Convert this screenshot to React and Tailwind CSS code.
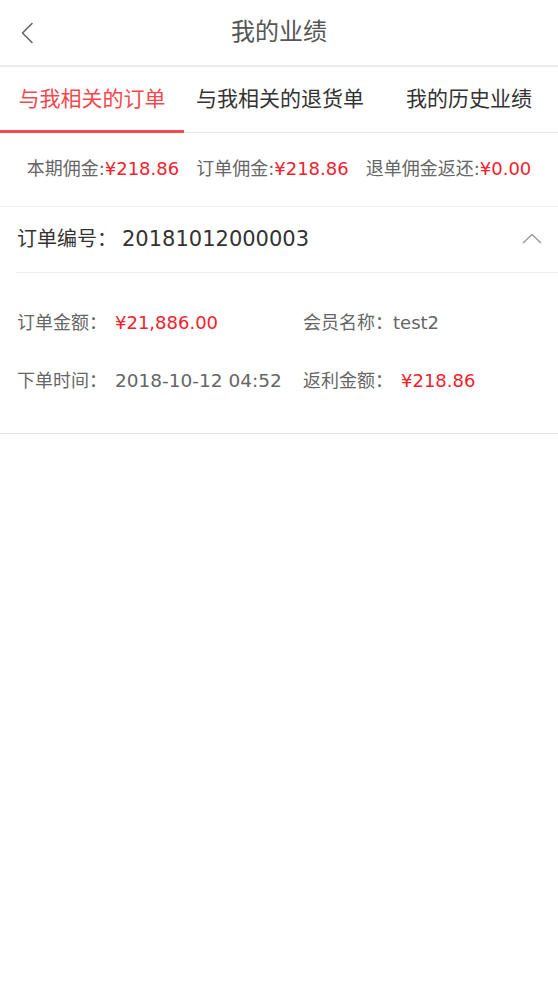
import { useState } from 'react';

const font = { fontFamily: '"DejaVu Sans", "Noto Sans CJK SC", sans-serif' };

const tabs = ['与我相关的订单', '与我相关的退货单', '我的历史业绩'];

const stats = [
  { label: '本期佣金:', value: '¥218.86' },
  { label: '订单佣金:', value: '¥218.86' },
  { label: '退单佣金返还:', value: '¥0.00' }
];

const App = () => {
  const [activeTab, setActiveTab] = useState(0);
  const [open, setOpen] = useState(true);

  return (
    <div className="min-h-screen bg-white" style={font}>
      {/* Header */}
      <header className="h-[67px] flex items-center relative border-b-2 border-[#ececec]">
        <button className="absolute left-[18px] top-[20px] p-0.5">
          <svg width="14" height="22" viewBox="0 0 14 22" fill="none">
            <path d="M12 1.5 L2.5 11 L12 20.5" stroke="#666" strokeWidth="1.6" strokeLinecap="round" strokeLinejoin="round" />
          </svg>
        </button>
        <h1 className="w-full text-center text-[24px] text-[#555] leading-none -mt-[2px]">我的业绩</h1>
      </header>

      {/* Tabs */}
      <nav className="flex h-[66px] border-b border-[#e8e8e8]">
        {tabs.map((tab, i) => (
          <button
            key={tab}
            onClick={() => setActiveTab(i)}
            className={`relative flex items-center justify-center text-[21px] leading-none ${
              i === 0 ? 'w-[184px]' : i === 1 ? 'w-[192px]' : 'flex-1 pl-[4px]'
            } ${activeTab === i ? 'text-[#f5474d]' : 'text-[#333]'}`}
          >
            {tab}
            {activeTab === i && (
              <span className="absolute left-0 right-0 -bottom-px h-[3px] bg-[#f5474d]" />
            )}
          </button>
        ))}
      </nav>

      {/* Commission summary */}
      <div className="h-[74px] flex items-center justify-center gap-[17px] border-b border-[#eeeeee] text-[18px] pb-[2px]">
        {stats.map((s) => (
          <span key={s.label} className="whitespace-nowrap">
            <span className="text-[#666]">{s.label}</span>
            <span className="text-[#f2222d]">{s.value}</span>
          </span>
        ))}
      </div>

      {/* Order card */}
      <div className="border-b border-[#e6e6e6]">
        <div className="ml-4 h-[66px] flex items-center justify-between border-b border-[#eeeeee]" onClick={() => setOpen(!open)}>
          <div className="text-[20px] text-[#333] pl-px whitespace-nowrap">
            订单编号：<span className="text-[21px] ml-[5px]">20181012000003</span>
          </div>
          <svg className="mr-[16px] mb-[2px]" width="20" height="11" viewBox="0 0 20 11" fill="none">
            <path d="M1 10 L10 1.5 L19 10" stroke="#999" strokeWidth="1.4" strokeLinejoin="round" />
          </svg>
        </div>

        {open && (
          <div className="pl-[17px] pt-[40px] pb-[42px] flex flex-col gap-[38px] text-[18px] leading-[20px]">
            <div className="flex">
              <div className="w-[286px] whitespace-nowrap">
                <span className="text-[#666]">订单金额：</span>
                <span className="text-[#f2222d] ml-[8px]">¥21,886.00</span>
              </div>
              <div className="whitespace-nowrap">
                <span className="text-[#666]">会员名称：</span>
                <span className="text-[#666]">test2</span>
              </div>
            </div>
            <div className="flex">
              <div className="w-[286px] whitespace-nowrap">
                <span className="text-[#666]">下单时间：</span>
                <span className="text-[#666] ml-[8px] text-[18.5px]">2018-10-12 04:52</span>
              </div>
              <div className="whitespace-nowrap">
                <span className="text-[#666]">返利金额：</span>
                <span className="text-[#f2222d] ml-[8px]">¥218.86</span>
              </div>
            </div>
          </div>
        )}
      </div>
    </div>
  );
};

export default App;
